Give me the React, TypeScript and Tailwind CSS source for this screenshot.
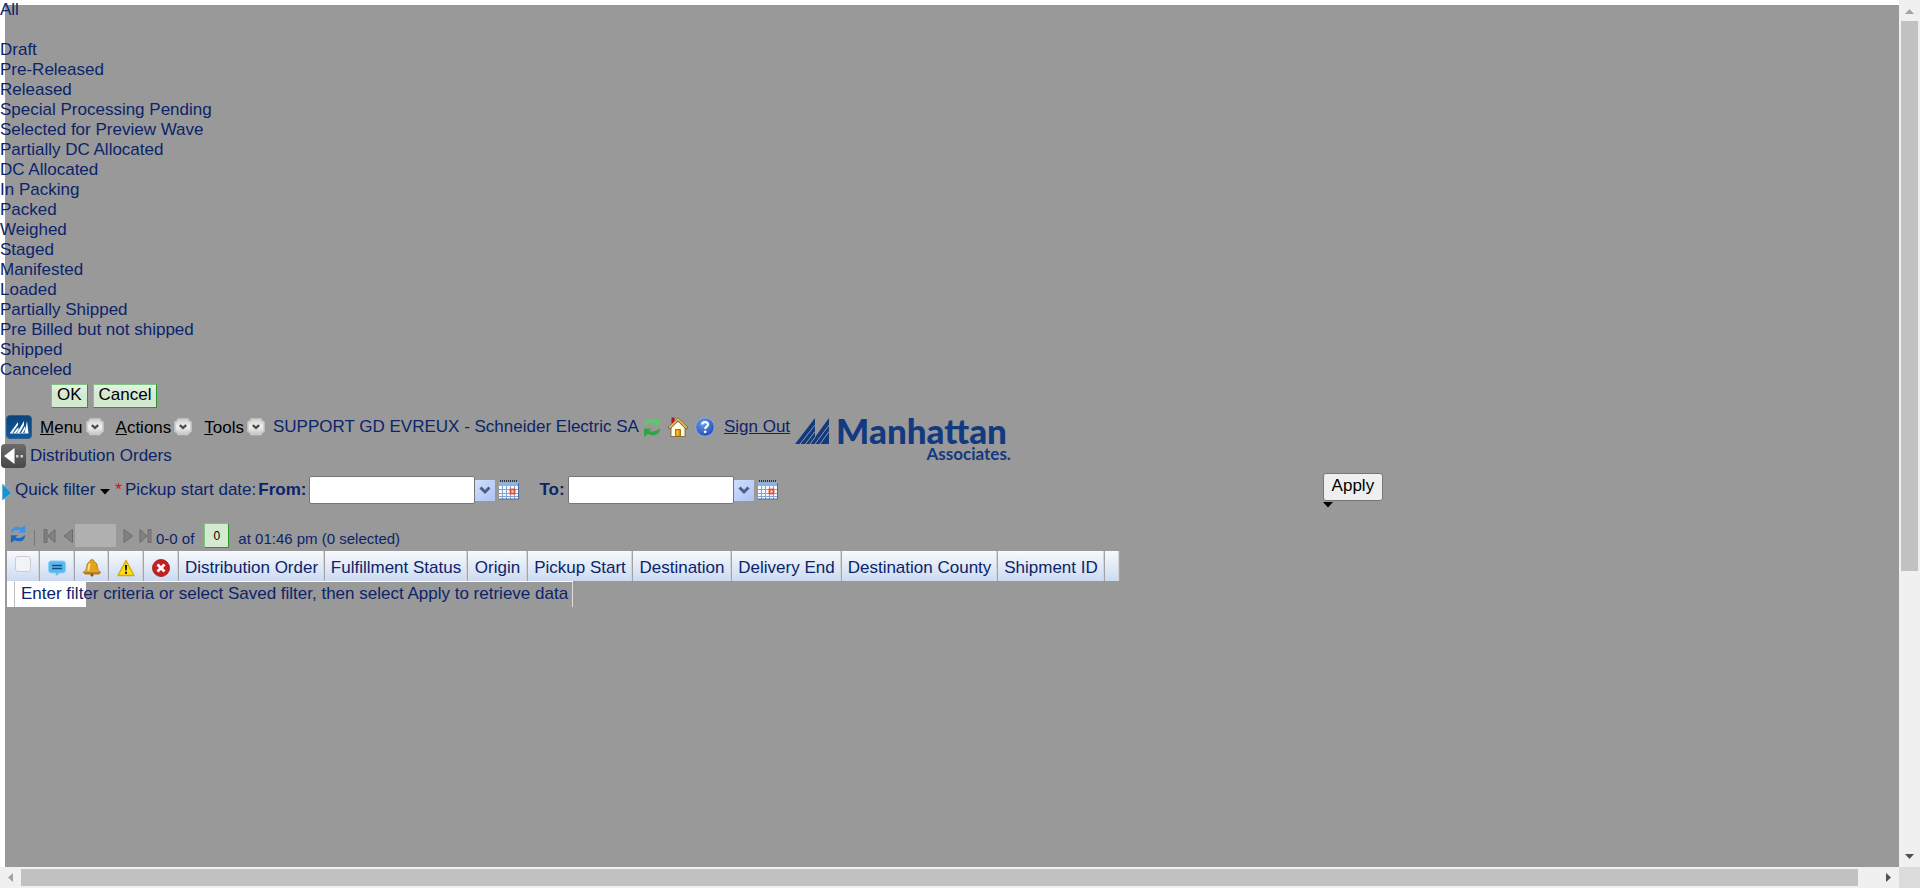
import type { ReactNode } from "react";

const statuses = [
  "Draft",
  "Pre-Released",
  "Released",
  "Special Processing Pending",
  "Selected for Preview Wave",
  "Partially DC Allocated",
  "DC Allocated",
  "In Packing",
  "Packed",
  "Weighed",
  "Staged",
  "Manifested",
  "Loaded",
  "Partially Shipped",
  "Pre Billed but not shipped",
  "Shipped",
  "Canceled",
];

const columns = [
  { name: "Distribution Order", width: "w-[146px]" },
  { name: "Fulfillment Status", width: "w-[143px]" },
  { name: "Origin", width: "w-[60px]" },
  { name: "Pickup Start", width: "w-[105px]" },
  { name: "Destination", width: "w-[99px]" },
  { name: "Delivery End", width: "w-[110px]" },
  { name: "Destination County", width: "w-[156px]" },
  { name: "Shipment ID", width: "w-[107px]" },
];

function AppIcon() {
  return (
    <svg width="26" height="24" viewBox="0 0 26 24" aria-hidden="true">
      <defs>
        <linearGradient id="app" x1="0" y1="0" x2="0" y2="1">
          <stop offset="0" stopColor="#0d4277" />
          <stop offset="1" stopColor="#115a9c" />
        </linearGradient>
      </defs>
      <rect x="0.5" y="0.5" width="25" height="23" rx="3.5" fill="url(#app)" stroke="#2a5f94" />
      <path d="M4 18 12 7v3L6.500 18zM7.500 18l5-6v3L10 18zM11 18 18 6v4l-4.500 8zM15 18l4-7v3.500l-2 3.500zM18.500 18l2.500-12 1.500 12z" fill="#fff" />
      <path d="M4 18.500h18.500" stroke="#9cc0e0" strokeWidth="0.800" />
    </svg>
  );
}

function RoundChevron() {
  return (
    <svg width="18" height="18" viewBox="0 0 18 18" aria-hidden="true">
      <defs>
        <linearGradient id="round" x1="0" y1="0" x2="0" y2="1">
          <stop offset="0" stopColor="#cfcfcf" />
          <stop offset="0.500" stopColor="#f0f0f0" />
          <stop offset="1" stopColor="#c4c4c4" />
        </linearGradient>
      </defs>
      <path d="M4 1h10q0 2.500 3 3v9.500q-3 .5-3 3H4q0-2.500-3-3V4q3-.5 3-3z" fill="url(#round)" stroke="#c9c9c9" strokeWidth="1.500" strokeLinejoin="round" />
      <path d="M5.800 7.200 9 10l3.200-2.800" fill="none" stroke="#4c4c4c" strokeWidth="2.400" />
    </svg>
  );
}

function SyncIcon({ color, dark, width, height }: { color: string; dark: string; width: number; height: number }) {
  return (
    <svg width={width} height={height} viewBox="0 0 18 20" aria-hidden="true">
      <path d="M1 9C1 3 6 0 13 3l4-3v8.500H9L12 6C8 4.500 4 6 1 9z" fill={color} />
      <path d="M17 11c0 6-5 9-12 6l-4 3v-8.500h8L6 14c4 1.500 8 0 11-3z" fill={dark} />
    </svg>
  );
}

function HomeIcon() {
  return (
    <svg width="20" height="20" viewBox="0 0 20 20" aria-hidden="true">
      <path d="M3.500 0.500h3v6h-3z" fill="#b5121f" />
      <path d="M3 10 10 3l7 7v9.500H3z" fill="#fffbe0" stroke="#6e5a2c" strokeWidth="0.800" />
      <path d="M0.800 11.500 10 2.500l9.200 9" fill="none" stroke="#6a4a18" strokeWidth="3" />
      <path d="M1.200 11 10 2.200l8.800 8.800" fill="none" stroke="#e0bd62" strokeWidth="1.800" />
      <path d="M7.500 12.500h5v7h-5z" fill="#d98a08" stroke="#94600a" strokeWidth="0.800" />
      <path d="M8.500 13.500h2v5h-2z" fill="#f5c33c" />
    </svg>
  );
}

function HelpIcon() {
  return (
    <svg width="20" height="20" viewBox="0 0 20 20" aria-hidden="true">
      <defs>
        <radialGradient id="help" cx="0.400" cy="0.300" r="0.700">
          <stop offset="0" stopColor="#6d9bea" />
          <stop offset="1" stopColor="#1f4fb4" />
        </radialGradient>
      </defs>
      <circle cx="10" cy="10" r="9.300" fill="url(#help)" stroke="#8fb0e6" />
      <path d="M7.200 7.600C7.200 4.300 13 4.300 13 7.600 13 9.800 10.200 9.700 10.200 12" fill="none" stroke="#fff" strokeWidth="2.200" />
      <circle cx="10.200" cy="14.800" r="1.400" fill="#fff" />
    </svg>
  );
}

function BackIcon() {
  return (
    <svg width="25" height="24" viewBox="0 0 25 24" aria-hidden="true">
      <defs>
        <linearGradient id="back" x1="0" y1="0" x2="0" y2="1">
          <stop offset="0" stopColor="#6b6b6b" />
          <stop offset="1" stopColor="#484848" />
        </linearGradient>
      </defs>
      <rect width="25" height="24" rx="4" fill="url(#back)" />
      <path d="M13.500 4v16L3 12z" fill="#fff" />
      <path d="M15 11h2.500v2.500H15zM19.500 11H22v2.500h-2.500z" fill="#d0d0d0" />
    </svg>
  );
}

function CalendarIcon() {
  return (
    <svg width="20" height="20" viewBox="0 0 20 20" aria-hidden="true">
      <path d="M0 2h20v17H0z" fill="#f4f8ff" />
      <path d="M0 2h20v4H0z" fill="#8fb2e0" />
      <path d="M1 1h18" stroke="#333" strokeWidth="2" strokeDasharray="1 1" />
      <path d="M3.500 6v13M7.500 6v13M11.500 6v13M15.500 6v13M0 9.500h20M0 13.500h20M0 16.500h20" stroke="#86a2cf" />
      <path d="M0 19h20M19.500 3v16" stroke="#4a6ca5" />
      <rect x="11.500" y="9.500" width="4" height="4" fill="#ffd8cc" stroke="#e2502c" strokeWidth="1.800" />
    </svg>
  );
}

function Logo() {
  return (
    <div className="flex items-start gap-[7px] font-['Lato',sans-serif] text-[#123a80]">
      <svg className="mt-1" width="34" height="28" viewBox="0 0 34 28" aria-hidden="true">
        <path d="M0 28 20 2v26zM15 28 34 2v26z" fill="#123a80" />
        <path d="M5 28 20 9M10.500 28 20 15.500M15 28l5.500-7.500M20 28 34 9M25 28l9-12.500" stroke="#999" strokeWidth="1" />
      </svg>
      <div className="flex flex-col items-end">
        <span className="text-[35px] leading-[36px] font-black">Manhattan</span>
        <span className="-mt-1 -mr-1 text-[17px] leading-5 font-bold">Associates.</span>
      </div>
    </div>
  );
}

function Caret() {
  return (
    <svg width="10" height="6" viewBox="0 0 10 6" aria-hidden="true">
      <path d="M0 0h10L5 5.500z" fill="#000" />
    </svg>
  );
}

function MenuButton({ label }: { label: string }) {
  return (
    <button type="button" className="flex items-center gap-[3px] text-black">
      <span>
        <span className="underline">{label[0]}</span>
        {label.slice(1)}
      </span>
      <span className="pb-[3px]">
        <RoundChevron />
      </span>
    </button>
  );
}

function DateField({ id, label }: { id: string; label: string }) {
  return (
    <div className="flex items-center">
      <label htmlFor={id} className="mr-[3px] font-bold">
        {label}
      </label>
      <input id={id} type="text" className="h-7 w-[166px] rounded-[2px] border border-[#767676] bg-white px-1 text-black" />
      <button type="button" aria-label={`${label} presets`} className="flex h-[21px] w-5 items-center justify-center bg-linear-to-br from-[#d0defc] to-[#aec3f5]">
        <svg width="12" height="9" viewBox="0 0 12 9" aria-hidden="true">
          <path d="M1.500 1.500 6 6l4.500-4.500" fill="none" stroke="#4a5f87" strokeWidth="3" />
        </svg>
      </button>
      <button type="button" aria-label={`${label} calendar`} className="ml-1">
        <CalendarIcon />
      </button>
    </div>
  );
}

function PagerButton({ label, children }: { label: string; children: ReactNode }) {
  return (
    <button type="button" aria-label={label} className="flex">
      <svg width="14" height="16" viewBox="0 0 14 16" fill="#828282" stroke="#6c6c6c" strokeWidth="1" aria-hidden="true">
        {children}
      </svg>
    </button>
  );
}

const headCell = "h-[30px] border-r border-[#a3a3a3] shadow-[inset_-1px_0_#d5d5d5] bg-linear-to-b from-[#f7fafd] to-[#ccdaf0] p-0";

function IconHead({ label, width, children }: { label: string; width: string; children: ReactNode }) {
  return (
    <th aria-label={label} className={`${headCell} ${width}`}>
      <div className="flex justify-center pt-1">{children}</div>
    </th>
  );
}

function Grid() {
  return (
    <table className="ml-[7px] w-[1113px] table-fixed border-separate border-spacing-0">
      <thead>
        <tr>
          <th className={`${headCell} w-[33px]`}>
            <input
              type="checkbox"
              aria-label="Select all"
              className="mx-auto mb-1 block size-4 appearance-none rounded-[3px] border border-[#ccc] bg-[#f1f3f6]"
            />
          </th>
          <IconHead label="Notes" width="w-[35px]">
            <svg width="18" height="17" viewBox="0 0 18 17" aria-hidden="true">
              <path d="M3 1h12q2.500 0 2.500 2.500v7q0 2.500-2.500 2.500h-3.500L8 16v-3H3Q.5 13 .5 10.500v-7Q.5 1 3 1z" fill="#58b9ee" stroke="#8fd0f4" />
              <path d="M4 5.500h10M4 8.500h10" stroke="#174e78" strokeWidth="1.600" />
            </svg>
          </IconHead>
          <IconHead label="Alerts" width="w-[34px]">
            <svg width="20" height="18" viewBox="0 0 20 18" aria-hidden="true">
              <path d="M10 0.500q2 0 2 2 3.500 1 3.500 6 0 3 3.500 5H1q3.500-2 3.500-5 0-5 3.500-6 0-2 2-2z" fill="#e5a51b" stroke="#a86c0b" strokeWidth="0.700" />
              <path d="M8 4.500q-1.500 2-1.500 7" stroke="#ffe68b" strokeWidth="1.800" fill="none" />
              <path d="M1 13.500h18l-2 2H3z" fill="#b97b10" />
              <circle cx="10" cy="16" r="1.600" fill="#8a570a" />
            </svg>
          </IconHead>
          <IconHead label="Warnings" width="w-[35px]">
            <svg width="18" height="18" viewBox="0 0 18 18" aria-hidden="true">
              <path d="M9 1.500 17 16.500H1z" fill="#ffdf12" stroke="#d3ac08" strokeWidth="1.400" strokeLinejoin="round" />
              <path d="M7.900 6h2.200l-.4 5.500H8.300zM8 12.800h2v2H8z" fill="#111" />
            </svg>
          </IconHead>
          <IconHead label="Errors" width="w-[35px]">
            <svg width="18" height="18" viewBox="0 0 18 18" aria-hidden="true">
              <circle cx="9" cy="9" r="8.500" fill="#c81e22" stroke="#8f1c20" strokeWidth="0.800" />
              <path d="M5.500 5.500l7 7M12.500 5.500l-7 7" stroke="#fff" strokeWidth="2.800" />
            </svg>
          </IconHead>
          {columns.map((c) => (
            <th key={c.name} className={`${headCell} ${c.width} font-normal whitespace-nowrap`}>
              <span className="block pt-[3px]">{c.name}</span>
            </th>
          ))}
          <th aria-label="Spacer" className={`${headCell} w-[15px]`} />
        </tr>
      </thead>
      <tbody>
        <tr>
          <td colSpan={14} className="p-0">
            <div className="flex h-[26px] w-max">
              <div className="w-[7px] bg-white" />
              <div className="border-t border-r border-l border-t-white border-r-[#ddd] border-l-[#bbb] bg-[linear-gradient(90deg,#fff_71px,transparent_71px)] pt-[2px] pr-1 pl-[6px]">
                Enter filter criteria or select Saved filter, then select Apply to retrieve data
              </div>
            </div>
          </td>
        </tr>
      </tbody>
    </table>
  );
}

function Arrow({ d, color }: { d: string; color: string }) {
  return (
    <svg width="21" height="21" viewBox="0 0 21 21" className="shrink-0" aria-hidden="true">
      <path d={d} fill={color} />
    </svg>
  );
}

export default function App() {
  return (
    <div className="grid h-screen grid-cols-[minmax(0,1fr)_21px] grid-rows-[minmax(0,1fr)_21px] overflow-hidden bg-white font-['Liberation_Sans',Arial,sans-serif] text-[17px] leading-5 text-[#0b246a]">
      <main className="relative isolate overflow-hidden">
        <div className="absolute top-[5px] right-0 bottom-0 left-[5px] -z-10 bg-[#999]" />

        <ul>
          <li className="mb-5">All</li>
          {statuses.map((s) => (
            <li key={s}>{s}</li>
          ))}
        </ul>
        <div className="mt-1 ml-[51px] flex gap-[5px] text-black">
          {["OK", "Cancel"].map((t) => (
            <button
              key={t}
              type="button"
              className="h-6 border border-t-[#7fc47f] border-r-[#2a972a] border-b-[#2a972a] border-l-[#7fc47f] bg-linear-to-b from-[#e6f3e6] to-[#d3ead0] to-40% px-[5px] pb-[2px]"
            >
              {t}
            </button>
          ))}
        </div>

        <header className="mt-1 flex items-start gap-[5px]">
          <div>
            <nav className="flex h-[30px] items-center pl-[6px]">
              <a href="#home" aria-label="Application home" className="mr-2">
                <AppIcon />
              </a>
              <div className="flex gap-3 pt-[2px]">
                <MenuButton label="Menu" />
                <MenuButton label="Actions" />
                <MenuButton label="Tools" />
              </div>
              <span className="ml-2">SUPPORT GD EVREUX - Schneider Electric SA</span>
              <button type="button" aria-label="Refresh" className="ml-1">
                <SyncIcon color="#5cc86a" dark="#2fa544" width={18} height={20} />
              </button>
              <button type="button" aria-label="Home" className="ml-[7px]">
                <HomeIcon />
              </button>
              <button type="button" aria-label="Help" className="ml-[7px]">
                <HelpIcon />
              </button>
              <a href="#signout" className="ml-[9px] underline">
                Sign Out
              </a>
            </nav>
            <div className="flex h-7 items-center gap-1 pl-px">
              <button type="button" aria-label="Back">
                <BackIcon />
              </button>
              <h1>Distribution Orders</h1>
            </div>
          </div>
          <Logo />
        </header>

        <section className="flex h-10 items-center">
          <svg width="10" height="16" viewBox="0 0 10 16" className="mt-1 ml-[2px]" aria-hidden="true">
            <path d="M0.500 0 9.500 9 0.500 16z" fill="#1d8fc9" stroke="#5cb8e2" />
          </svg>
          <button type="button" className="ml-[3px] flex items-center gap-[5px]">
            Quick filter
            <span className="pt-1">
              <Caret />
            </span>
          </button>
          <span className="ml-[5px] text-red-600">*</span>
          <span className="mr-[2px] ml-[3px]">Pickup start date:</span>
          <DateField id="from" label="From:" />
          <div className="ml-5">
            <DateField id="to" label="To:" />
          </div>
          <div className="ml-[545px] flex flex-col gap-px">
            <button type="button" className="h-7 rounded-[3px] border border-[#767676] bg-[#efefef] px-2 pb-px text-black">
              Apply
            </button>
            <Caret />
          </div>
        </section>

        <section className="mt-[10px] flex h-[31px] items-center text-[15px]">
          <button type="button" aria-label="Reload list" className="mb-1 ml-[10px]">
            <SyncIcon color="#3b95e6" dark="#1c67c4" width={16} height={18} />
          </button>
          <span className="mt-[5px] mr-2 ml-2 h-4 border-l border-[#777]" />
          <PagerButton label="First page">
            <path d="M1 1.500h3v13H1zM12 1.500v13L5 8z" />
          </PagerButton>
          <span className="ml-1">
            <PagerButton label="Previous page">
              <path d="M11.500 1.500v13L3 8z" />
            </PagerButton>
          </span>
          <input type="text" aria-label="Page number" className="mb-px h-[23px] w-[41px] bg-[#b0b0b0] px-1" />
          <span className="ml-[6px]">
            <PagerButton label="Next page">
              <path d="M2 1.500v13L10.500 8z" />
            </PagerButton>
          </span>
          <span className="ml-[2px]">
            <PagerButton label="Last page">
              <path d="M2 1.500v13L9 8zM10 1.500h3v13h-3z" />
            </PagerButton>
          </span>
          <span className="mt-[6px] ml-1">0-0 of</span>
          <button
            type="button"
            className="mr-[9px] ml-[10px] h-[25px] w-[25px] border border-t-[#7fc47f] border-r-[#2a972a] border-b-[#2a972a] border-l-[#7fc47f] bg-[#d3ead0] text-[12px] text-black"
          >
            0
          </button>
          <span className="mt-[6px]">at 01:46 pm (0 selected)</span>
        </section>

        <Grid />
      </main>

      <div className="flex flex-col items-center bg-[#f0f0f0]">
        <Arrow d="M6 14 10.500 9 15 14z" color="#a3a3a3" />
        <div className="w-[17px] grow-2 bg-[#c1c1c1]" />
        <div className="grow" />
        <Arrow d="M6 8h9l-4.500 5z" color="#505050" />
      </div>
      <div className="flex items-center bg-[#f0f0f0]">
        <Arrow d="M13 6v9l-5-4.500z" color="#a3a3a3" />
        <div className="mr-5 h-[17px] grow bg-[#c1c1c1]" />
        <Arrow d="M8 6v9l5-4.500z" color="#505050" />
      </div>
      <div className="bg-[#dcdcdc]" />
    </div>
  );
}
